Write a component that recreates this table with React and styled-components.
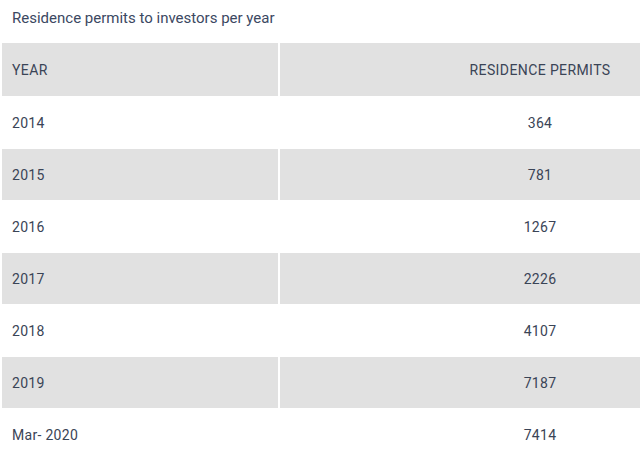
import React from "react";
import styled, { createGlobalStyle } from "styled-components";

const rows = [
  { year: "2014", permits: "364" },
  { year: "2015", permits: "781" },
  { year: "2016", permits: "1267" },
  { year: "2017", permits: "2226" },
  { year: "2018", permits: "4107" },
  { year: "2019", permits: "7187" },
  { year: "Mar- 2020", permits: "7414" },
];

const GlobalStyle = createGlobalStyle`
  body {
    margin: 0;
    background: #ffffff;
    font-family: Roboto, "Liberation Sans", sans-serif;
    color: #3a4456;
    overflow: hidden;
  }
`;

const Wrapper = styled.div`
  width: 640px;
  height: 461px;
  overflow: hidden;
`;

const Title = styled.div`
  height: 43px;
  padding: 0 0 7px 12px;
  display: flex;
  align-items: center;
  font-size: 15px;
  color: #3b4862;
  box-sizing: border-box;
`;

const Table = styled.div`
  display: grid;
  grid-template-columns: 276px 1fr;
  column-gap: 2px;
  row-gap: 1px;
  padding-left: 2px;
`;

const Cell = styled.div`
  height: ${(p) => (p.$head ? 53 : 51)}px;
  display: flex;
  align-items: center;
  background: ${(p) => (p.$shade ? "#e1e1e1" : "#ffffff")};
  font-size: 14px;
  letter-spacing: ${(p) => (p.$head ? "0.4px" : "0.3px")};
  color: #3a4456;
  box-sizing: border-box;
  padding-left: ${(p) => (p.$num ? "160px" : "10px")};
  justify-content: ${(p) => (p.$num ? "center" : "flex-start")};
`;

export default function App() {
  return (
    <>
      <GlobalStyle />
      <Wrapper>
        <Title>Residence permits to investors per year</Title>
        <Table>
          <Cell $head $shade>YEAR</Cell>
          <Cell $head $shade $num>RESIDENCE PERMITS</Cell>
          {rows.map((r, i) => (
            <React.Fragment key={r.year}>
              <Cell $shade={i % 2 === 1}>{r.year}</Cell>
              <Cell $shade={i % 2 === 1} $num>
                {r.permits}
              </Cell>
            </React.Fragment>
          ))}
        </Table>
      </Wrapper>
    </>
  );
}
